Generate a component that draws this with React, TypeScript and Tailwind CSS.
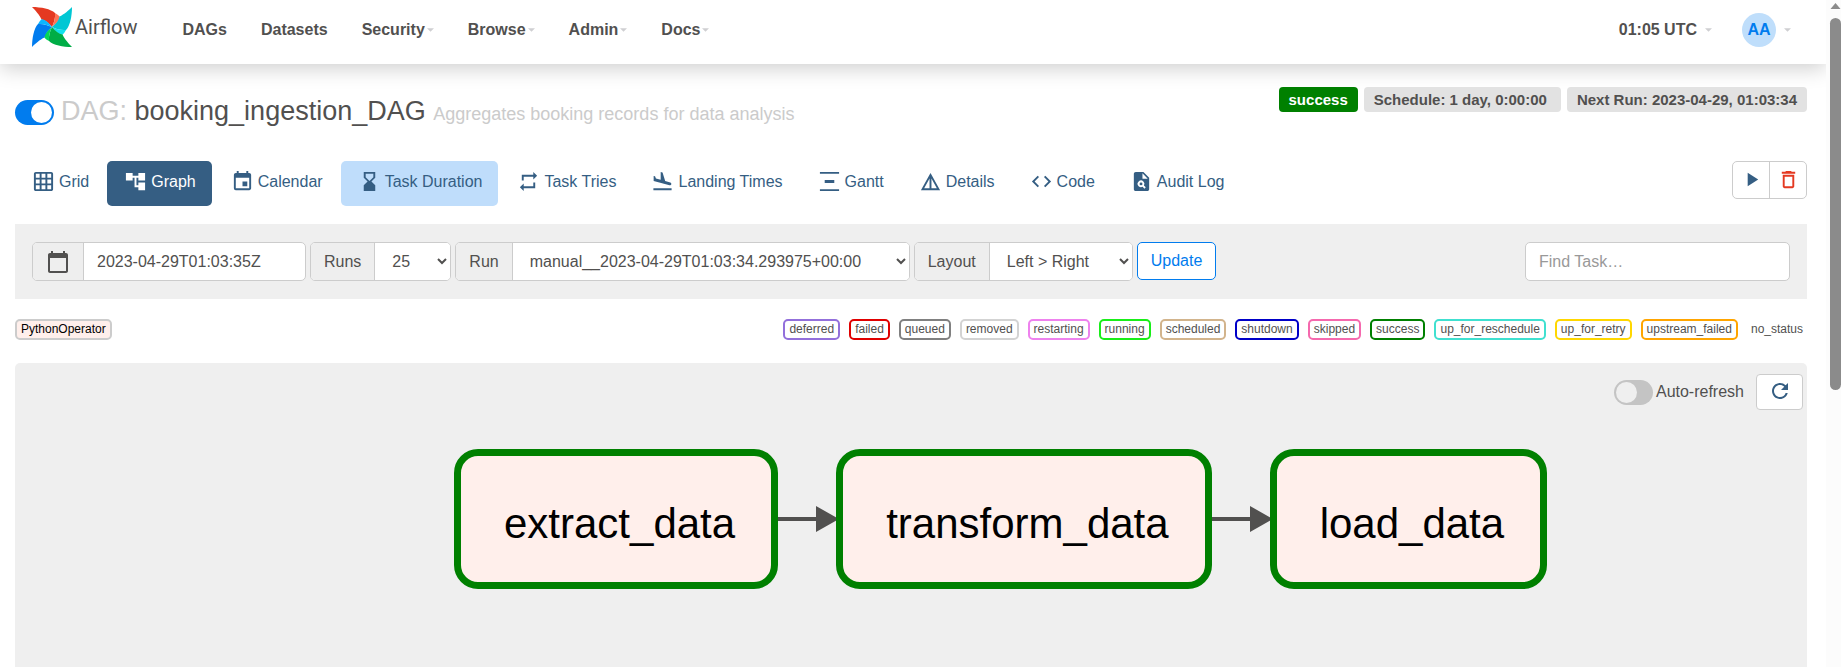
import type { ReactNode } from "react";
import type { IconType } from "react-icons";
import {
  MdAccountTree,
  MdCalendarToday,
  MdCode,
  MdDeleteOutline,
  MdDetails,
  MdEvent,
  MdFlightLand,
  MdGridOn,
  MdHourglassBottom,
  MdPlagiarism,
  MdPlayArrow,
  MdRefresh,
  MdRepeat,
  MdVerticalDistribute,
} from "react-icons/md";

const navItems = [
  { label: "DAGs", menu: false },
  { label: "Datasets", menu: false },
  { label: "Security", menu: true },
  { label: "Browse", menu: true },
  { label: "Admin", menu: true },
  { label: "Docs", menu: true },
];

const tabs: { label: string; Icon: IconType; tone: string }[] = [
  { label: "Grid", Icon: MdGridOn, tone: "text-[#355e83]" },
  { label: "Graph", Icon: MdAccountTree, tone: "bg-[#355e83] text-white" },
  { label: "Calendar", Icon: MdEvent, tone: "text-[#355e83]" },
  { label: "Task Duration", Icon: MdHourglassBottom, tone: "bg-[#bfddfb] text-[#355e83]" },
  { label: "Task Tries", Icon: MdRepeat, tone: "text-[#355e83]" },
  { label: "Landing Times", Icon: MdFlightLand, tone: "text-[#355e83]" },
  { label: "Gantt", Icon: MdVerticalDistribute, tone: "text-[#355e83]" },
  { label: "Details", Icon: MdDetails, tone: "text-[#355e83]" },
  { label: "Code", Icon: MdCode, tone: "text-[#355e83]" },
  { label: "Audit Log", Icon: MdPlagiarism, tone: "text-[#355e83]" },
];

const states = [
  { label: "deferred", look: "border-2 border-[#9370db]" },
  { label: "failed", look: "border-2 border-[#e00000]" },
  { label: "queued", look: "border-2 border-[#808080]" },
  { label: "removed", look: "border-2 border-[#d3d3d3]" },
  { label: "restarting", look: "border-2 border-[#ee82ee]" },
  { label: "running", look: "border-2 border-[#19ee19]" },
  { label: "scheduled", look: "border-2 border-[#d2b48c]" },
  { label: "shutdown", look: "border-2 border-[#0000c8]" },
  { label: "skipped", look: "border-2 border-[#f569ae]" },
  { label: "success", look: "border-2 border-[#008000]" },
  { label: "up_for_reschedule", look: "border-2 border-[#40e0d0]" },
  { label: "up_for_retry", look: "border-2 border-[#ffd700]" },
  { label: "upstream_failed", look: "border-2 border-[#ffa500]" },
  { label: "no_status", look: "py-[2px]" },
];

function Caret() {
  return (
    <svg width="7" height="4" viewBox="0 0 8 4" className="fill-[#cfcfd2]" aria-hidden="true">
      <path d="M0 0h8L4 4z" />
    </svg>
  );
}

const blades = [
  { turn: "rotate(0 20 20)", main: "#e43921", light: "#ff7557" },
  { turn: "rotate(90 20 20)", main: "#00c7d4", light: "#11e1ee" },
  { turn: "rotate(180 20 20)", main: "#00ad46", light: "#04d659" },
  { turn: "rotate(270 20 20)", main: "#017cee", light: "#0cb6ff" },
];

function Pinwheel() {
  return (
    <svg width="40" height="40" viewBox="0 0 40 40" aria-hidden="true">
      {blades.map((b) => (
        <g key={b.turn} transform={b.turn}>
          <path fill={b.main} d="M0 0C9 0 19 2 23 6C23.5 11 22 16 20 20C17 16 13 13 9.5 12.5C7.500 8 3 3 0 0Z" />
          <path fill={b.light} d="M23 6Q26 7.500 27.700 9.500C28 13 24 17 20 20C22 16 23.500 11 23 6Z" />
        </g>
      ))}
    </svg>
  );
}

function Field({ id, label, children }: { id: string; label: ReactNode; children: ReactNode }) {
  return (
    <div className="flex h-[39px] overflow-hidden rounded-[5px] border border-[#ccc] bg-white">
      <label htmlFor={id} className="flex items-center border-r border-[#ccc] bg-[#eee] px-[13px]">
        {label}
      </label>
      {children}
    </div>
  );
}

function TaskNode({ name }: { name: string }) {
  return (
    <div className="flex h-[140px] shrink-0 items-center rounded-[24px] border-[7px] border-[#008000] bg-[#ffefeb] pt-[10px] pr-9 pl-[43px] text-[42px] leading-[48px] text-black">
      {name}
    </div>
  );
}

function Edge() {
  return (
    <svg width="58" height="26" viewBox="0 0 58 26" className="shrink-0 overflow-visible fill-[#51504f]" aria-hidden="true">
      <path d="M0 11h38V0l23 13-23 13V15H0z" />
    </svg>
  );
}

function Scrollbar() {
  return (
    <div className="flex w-[15px] shrink-0 flex-col items-end bg-[#fcfcfc]" aria-hidden="true">
      <svg width="11" height="18" viewBox="0 0 11 18" className="shrink-0 fill-[#8b8b8b]">
        <path d="M5.500 3L10.500 9H0.500z" />
      </svg>
      <div className="h-[372px] w-[11px] rounded-full bg-[#8b8b8b]" />
    </div>
  );
}

export default function App() {
  return (
    <div className="flex min-h-screen bg-white font-['Liberation_Sans',Arial,sans-serif] text-base text-[#51504f]">
      <div className="flex min-w-0 flex-1 flex-col">
        <header className="flex h-16 items-start justify-between pr-[35px] pl-8 font-bold shadow-[0_4px_20px_rgba(0,0,0,0.2)]">
          <div className="flex items-start">
            <a href="#home" className="mr-[28px] flex items-start gap-[3px] pt-[7px]">
              <Pinwheel />
              <span className="font-[Roboto,sans-serif] text-[20px] leading-[40px] font-normal">Airflow</span>
            </a>
            <nav className="flex">
              {navItems.map((item) => (
                <a key={item.label} href={"#" + item.label} className="flex items-center gap-[2px] px-[17px] pt-[1px] leading-[58px]">
                  {item.label}
                  {item.menu && <Caret />}
                </a>
              ))}
            </nav>
          </div>
          <div className="flex h-[60px] items-center gap-[30px]">
            <button className="flex items-center gap-2">
              01:05 UTC
              <Caret />
            </button>
            <button className="flex items-center gap-2">
              <span className="flex size-[34px] items-center justify-center rounded-full bg-[#bfdefb] text-[#017cee]">AA</span>
              <Caret />
            </button>
          </div>
        </header>

        <main className="flex flex-1 flex-col pt-[23px] pr-[19px] pl-[15px]">
          <div className="flex items-start justify-between">
            <div className="mt-[6px] flex items-center">
              <input
                type="checkbox"
                defaultChecked
                aria-label="Pause or unpause DAG"
                className="mr-[7px] flex h-[25px] w-[39px] appearance-none items-center justify-end rounded-full bg-[#017cee] p-[2px] before:size-[21px] before:rounded-full before:bg-white before:content-['']"
              />
              <h1 className="text-[27px] leading-[36px]">
                <span className="text-[#cbcbcb]">DAG:</span> booking_ingestion_DAG{" "}
                <small className="text-[18px] text-[#cbcbcb]">Aggregates booking records for data analysis</small>
              </h1>
            </div>
            <div className="flex gap-[6px] text-[15px] leading-[25px] font-bold">
              <span className="rounded-[4px] bg-[#008000] px-[10px] text-white">success</span>
              <span className="rounded-[4px] bg-[#e2e2e2] pr-[14px] pl-[10px]">Schedule: 1 day, 0:00:00</span>
              <span className="rounded-[4px] bg-[#e2e2e2] px-[10px]">Next Run: 2023-04-29, 01:03:34</span>
            </div>
          </div>

          <div className="mt-[29px] flex items-start justify-between">
            <nav className="flex gap-[2px]">
              {tabs.map(({ label, Icon, tone }) => (
                <a key={label} href={"#" + label} className={"flex h-[45px] gap-1 rounded-[5px] pt-[9px] pr-4 pl-[17px] leading-[24px] " + tone}>
                  <Icon className="size-[23px]" />
                  {label}
                </a>
              ))}
            </nav>
            <div className="flex h-[38px] rounded-[5px] border border-[#ccc]">
              <button aria-label="Trigger DAG" className="flex w-[37px] items-center justify-center border-r border-[#ccc] pb-[2px] text-[#355e83]">
                <MdPlayArrow className="size-[23px]" />
              </button>
              <button aria-label="Delete DAG" className="flex w-[36px] items-center justify-center pb-[2px] text-[#e43921]">
                <MdDeleteOutline className="size-[23px]" />
              </button>
            </div>
          </div>

          <form className="mt-[18px] flex items-start justify-between bg-[#efefef] px-[17px] py-[18px]">
            <div className="flex gap-1">
              <Field id="base-date" label={<MdCalendarToday className="size-[24px]" aria-label="Base date" />}>
                <input id="base-date" defaultValue="2023-04-29T01:03:35Z" className="w-[221px] px-[13px]" />
              </Field>
              <Field id="num-runs" label="Runs">
                <select id="num-runs" className="w-[75px] bg-white px-[13px]">
                  <option>25</option>
                </select>
              </Field>
              <Field id="run-id" label="Run">
                <select id="run-id" className="w-[396px] bg-white px-[13px]">
                  <option>manual__2023-04-29T01:03:34.293975+00:00</option>
                </select>
              </Field>
              <Field id="layout" label="Layout">
                <select id="layout" className="w-[142px] bg-white px-[13px]">
                  <option>Left &gt; Right</option>
                </select>
              </Field>
              <button type="button" className="h-[38px] rounded-[5px] border border-[#017cee] bg-white px-[13px] text-[#017cee]">
                Update
              </button>
            </div>
            <input
              aria-label="Find Task"
              placeholder="Find Task…"
              className="h-[39px] w-[265px] rounded-[5px] border border-[#ccc] bg-white px-[13px] placeholder:text-[#999]"
            />
          </form>

          <div className="mt-5 flex justify-between text-xs leading-[17px]">
            <span className="rounded-[5px] border-2 border-[#ccc] bg-[#ffefeb] px-1 text-black">PythonOperator</span>
            <ul className="flex gap-[9px]">
              {states.map((s) => (
                <li key={s.label} className={"rounded-[5px] px-1 " + s.look}>
                  {s.label}
                </li>
              ))}
            </ul>
          </div>

          <section className="mt-[23px] flex-1 rounded-t-[5px] bg-[#efefef]">
            <div className="flex items-center justify-end pt-[11px] pr-1">
              <label className="mr-3 flex items-center gap-[3px]">
                <input
                  type="checkbox"
                  className="flex h-[25px] w-[39px] appearance-none items-center rounded-full bg-[#c4c4c4] p-[2px] before:size-[21px] before:rounded-full before:bg-[#efefef] before:content-['']"
                />
                Auto-refresh
              </label>
              <button aria-label="Refresh" className="flex h-9 w-[47px] items-center justify-center rounded-[4px] border border-[#ccc] bg-white pb-[2px] text-[#355e83]">
                <MdRefresh className="size-6" />
              </button>
            </div>
            <div className="mt-[39px] flex items-center pl-[439px]">
              <TaskNode name="extract_data" />
              <Edge />
              <TaskNode name="transform_data" />
              <Edge />
              <TaskNode name="load_data" />
            </div>
          </section>
        </main>
      </div>
      <Scrollbar />
    </div>
  );
}
